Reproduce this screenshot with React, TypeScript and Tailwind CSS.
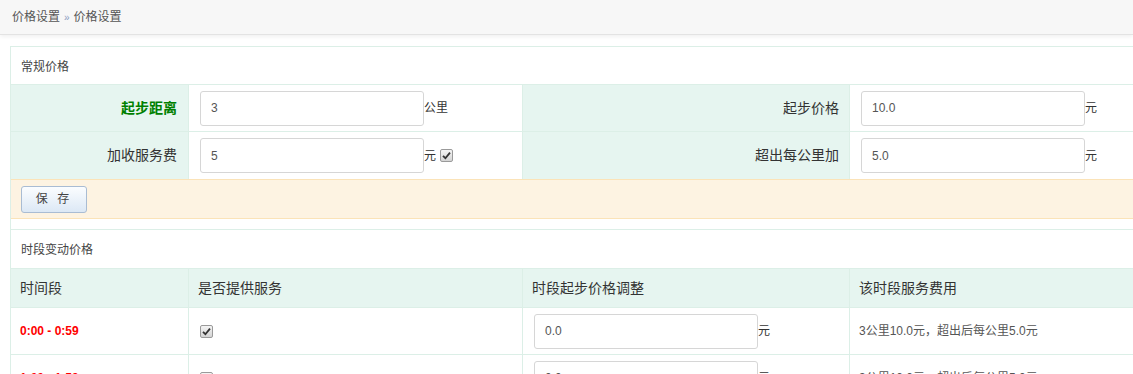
import React from 'react'

const font = { fontFamily: '"Liberation Sans", "Noto Sans CJK SC", sans-serif' }

function Check() {
  return (
    <span className="inline-flex items-center justify-center w-[13px] h-[13px] rounded-[2px] border border-[#9a9a9a] bg-gradient-to-b from-[#f4f4f4] to-[#d4d4d4]">
      <svg width="9" height="9" viewBox="0 0 9 9">
        <path d="M1 4.8 L3.4 7.2 L8 1.6" fill="none" stroke="#333" strokeWidth="1.8" />
      </svg>
    </span>
  )
}

function Field({ value }: { value: string }) {
  return (
    <div className="w-[224px] h-[35px] border border-[#d6d6d6] rounded-[3px] bg-white flex items-center pl-[10px] text-[12px] text-[#555]">
      {value}
    </div>
  )
}

const rows = [
  { time: '0:00 - 0:59', adj: '0.0' },
  { time: '1:00 - 1:59', adj: '0.0' },
]

export default function App() {
  return (
    <div className="w-[1133px] h-[374px] overflow-hidden bg-white text-[#333]" style={font}>
      {/* Breadcrumb */}
      <div className="h-[35px] bg-[#f7f7f7] border-b border-[#e3e3e3] shadow-[0_2px_4px_rgba(0,0,0,0.06)] flex items-center px-[12px] text-[12px] text-[#555]">
        价格设置<span className="mx-[4px] text-[10px] text-[#8a9cc0]">»</span>价格设置
      </div>

      <div className="pt-[11px] pl-[10px]">
        <div className="w-[1140px] border-l border-t border-[#dcefe7]">
          {/* 常规价格 */}
          <div className="h-[38px] flex items-center pl-[10px] pt-[2px] text-[12px] text-[#444] border-b border-[#dcefe7]">常规价格</div>
          <div className="grid grid-cols-[178px_334px_327px_1fr] text-[14px]">
            <div className="h-[47px] bg-[#e6f5f0] border-b border-r border-[#dcefe7] flex items-center justify-end pr-[11px] font-bold text-[#008000]">起步距离</div>
            <div className="h-[47px] border-b border-r border-[#dcefe7] flex items-center pl-[11px] text-[12px]">
              <Field value="3" />公里
            </div>
            <div className="h-[47px] bg-[#e6f5f0] border-b border-r border-[#dcefe7] flex items-center justify-end pr-[10px]">起步价格</div>
            <div className="h-[47px] border-b border-[#dcefe7] flex items-center pl-[11px] text-[12px]">
              <Field value="10.0" />元
            </div>
            <div className="h-[47px] bg-[#e6f5f0] border-r border-[#dcefe7] flex items-center justify-end pr-[11px]">加收服务费</div>
            <div className="h-[47px] border-r border-[#dcefe7] flex items-center pl-[11px] text-[12px]">
              <Field value="5" />元<span className="ml-[4px]"><Check /></span>
            </div>
            <div className="h-[47px] bg-[#e6f5f0] border-r border-[#dcefe7] flex items-center justify-end pr-[10px]">超出每公里加</div>
            <div className="h-[47px] flex items-center pl-[11px] text-[12px]">
              <Field value="5.0" />元
            </div>
          </div>
          <div className="h-[40px] bg-[#fdf3e2] border-t border-b border-[#fbe3b8] flex items-center pl-[10px]">
            <button className="w-[66px] h-[27px] rounded-[3px] border border-[#a9bcd3] bg-gradient-to-b from-[#fbfdff] to-[#dce8f5] text-[12px] text-[#444] tracking-[3px]">保 存</button>
          </div>
          <div className="h-[11px] border-b border-[#dcefe7]" />

          {/* 时段变动价格 */}
          <div className="h-[39px] flex items-center pl-[10px] pt-[2px] text-[12px] text-[#444] border-b border-[#dcefe7]">时段变动价格</div>
          <div className="grid grid-cols-[178px_334px_327px_1fr] text-[14px]">
            <div className="h-[39px] bg-[#e6f5f0] border-b border-r border-[#dcefe7] flex items-center pl-[9px]">时间段</div>
            <div className="h-[39px] bg-[#e6f5f0] border-b border-r border-[#dcefe7] flex items-center pl-[9px]">是否提供服务</div>
            <div className="h-[39px] bg-[#e6f5f0] border-b border-r border-[#dcefe7] flex items-center pl-[9px]">时段起步价格调整</div>
            <div className="h-[39px] bg-[#e6f5f0] border-b border-[#dcefe7] flex items-center pl-[9px]">该时段服务费用</div>
            {rows.map((r) => (
              <React.Fragment key={r.time}>
                <div className="h-[47px] border-b border-r border-[#dcefe7] flex items-center pl-[9px] text-[12px] font-bold text-[#f00]">{r.time}</div>
                <div className="h-[47px] border-b border-r border-[#dcefe7] flex items-center pl-[11px]"><Check /></div>
                <div className="h-[47px] border-b border-r border-[#dcefe7] flex items-center pl-[11px] text-[12px]">
                  <Field value={r.adj} />元
                </div>
                <div className="h-[47px] border-b border-[#dcefe7] flex items-center pl-[9px] text-[12px] text-[#555]">3公里10.0元，超出后每公里5.0元</div>
              </React.Fragment>
            ))}
          </div>
        </div>
      </div>
    </div>
  )
}
